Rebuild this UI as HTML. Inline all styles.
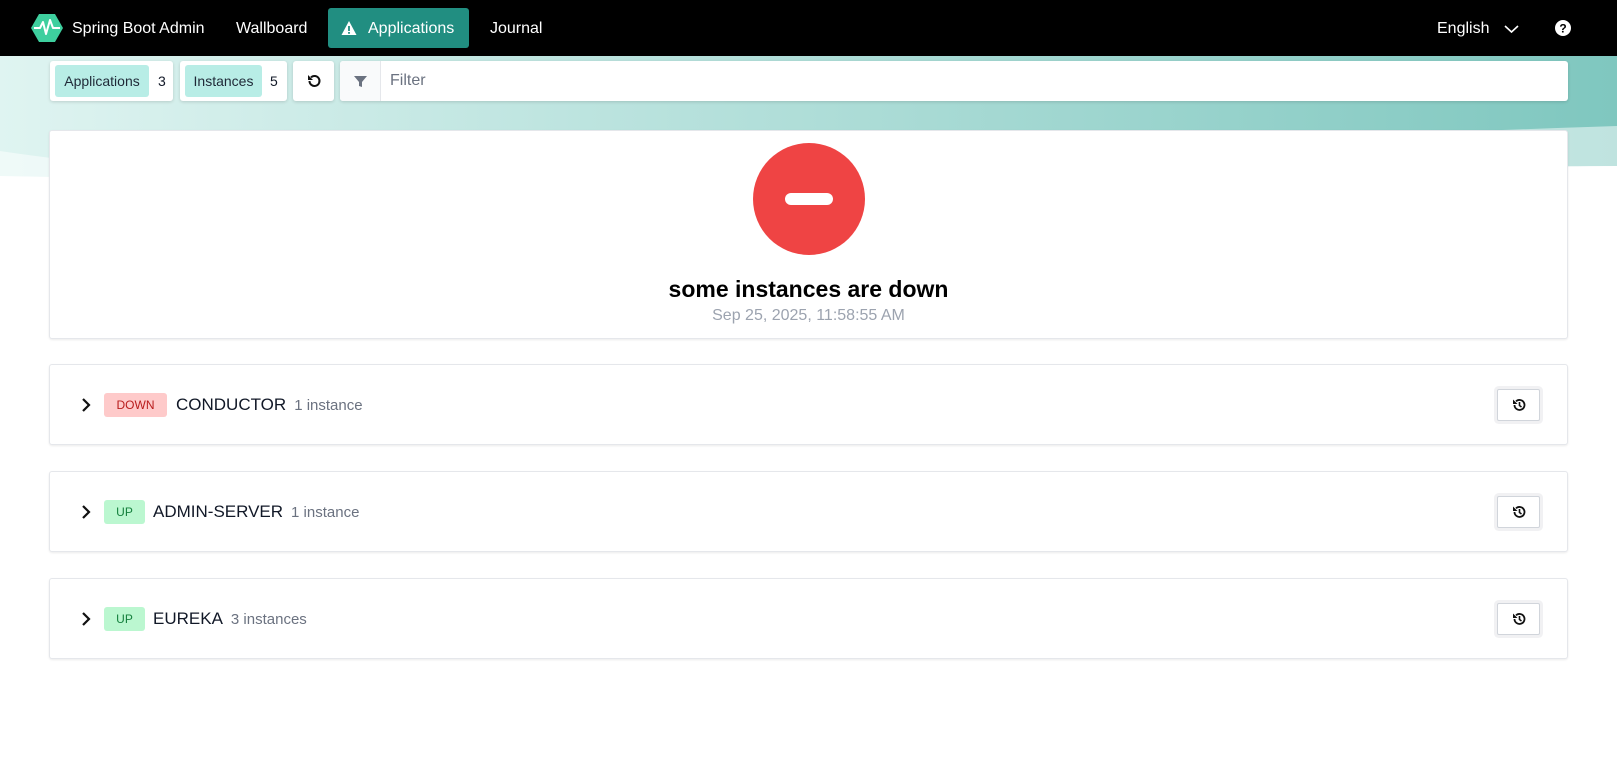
<!DOCTYPE html>
<html><head><style>
*{box-sizing:border-box;margin:0;padding:0}
body{width:1617px;height:758px;overflow:hidden;background:#fff;font-family:"Liberation Sans",sans-serif;position:relative;color:#111827}
.nav{position:absolute;left:0;top:0;width:1617px;height:56px;background:#000;color:#fff;font-size:16px}
.nav span{position:absolute;top:20px}
.bg{position:absolute;left:0;top:56px;width:1617px;height:130px}
.tb{position:absolute;top:61px;height:40px;background:#fff;border-radius:3px;box-shadow:0 1px 3px rgba(0,0,0,.15)}
.chip{position:absolute;top:4px;height:32px;background:#b8ede6;border-radius:3px;font-size:14px;line-height:32px;text-align:center;color:#1f2937}
.card{position:absolute;left:49px;width:1519px;background:#fff;border:1px solid #e5e7eb;border-radius:3px;box-shadow:0 1px 2px rgba(0,0,0,.08)}
.row .chev{position:absolute;left:30px;top:32px}
.badge{position:absolute;top:28px;height:24px;border-radius:3px;font-size:12px;line-height:24px;text-align:center}
.name{position:absolute;top:30px;font-size:17px;color:#111827}
.cnt{font-size:15px;color:#6b7280;margin-left:8px}
.hb{position:absolute;left:1447px;top:24px;width:43px;height:32px;border:1px solid #d1d5db;background:#fff;box-shadow:0 0 0 3px #f1f1f3;border-radius:2px}
</style></head><body>
<div class="nav">
<svg style="position:absolute;left:31px;top:13px" width="32" height="30" viewBox="0 0 32 30"><polygon points="8,1 24,1 32,15 24,29 8,29 0,15" fill="#3ecf9e"/><polyline points="3,15 9,15 12,9 15,21 19,7 22,15 29,15" fill="none" stroke="#fff" stroke-width="2" stroke-linejoin="round"/></svg>
<span style="left:72px">Spring Boot Admin</span>
<span style="left:236px">Wallboard</span>
<div style="position:absolute;left:328px;top:8px;width:141px;height:40px;background:#218e81;border-radius:3px"></div>
<svg style="position:absolute;left:341px;top:20px" width="16" height="16" viewBox="0 0 16 16"><path d="M8 1L15.5 15H.5Z" fill="#fff"/><rect x="7.1" y="6" width="1.8" height="5" fill="#218e81"/><rect x="7.1" y="12" width="1.8" height="1.8" fill="#218e81"/></svg>
<span style="left:368px">Applications</span>
<span style="left:490px">Journal</span>
<span style="left:1437px">English</span>
<svg style="position:absolute;left:1504px;top:24px" width="15" height="10" viewBox="0 0 15 10"><polyline points="1,2 7.5,8 14,2" fill="none" stroke="#fff" stroke-width="1.6"/></svg>
<svg style="position:absolute;left:1555px;top:20px" width="16" height="16" viewBox="0 0 16 16"><circle cx="8" cy="8" r="8" fill="#fff"/><text x="8" y="12.5" text-anchor="middle" font-size="12" font-weight="bold" font-family="Liberation Sans" fill="#000">?</text></svg>
</div>
<svg class="bg" width="1617" height="130" viewBox="0 0 1617 130" preserveAspectRatio="none"><defs><linearGradient id="g" x1="0" x2="1"><stop offset="0" stop-color="#dff4f1"/><stop offset="1" stop-color="#7fc7bf"/></linearGradient></defs><rect width="1617" height="130" fill="url(#g)"/><path d="M0 95 Q300 140 800 110 T1617 70 L1617 130 L0 130Z" fill="#fff" opacity=".5"/><path d="M0 120 Q500 130 1000 120 T1617 110 L1617 130 L0 130Z" fill="#fff"/></svg>
<div class="tb" style="left:50px;width:123px"><div class="chip" style="left:5px;width:94px">Applications</div><span style="position:absolute;left:108px;top:12px;font-size:14px">3</span></div>
<div class="tb" style="left:180px;width:107px"><div class="chip" style="left:5px;width:77px">Instances</div><span style="position:absolute;left:90px;top:12px;font-size:14px">5</span></div>
<div class="tb" style="left:293px;width:41px"><svg style="position:absolute;left:13px;top:12px" width="16" height="16" viewBox="0 0 16 16"><path d="M3.5 8A5 5 0 1 0 5 4.4" fill="none" stroke="#111" stroke-width="2"/><path d="M2 2V7H7Z" fill="#111"/></svg></div>
<div class="tb" style="left:340px;width:1228px"><div style="position:absolute;left:0;top:0;width:41px;height:40px;background:#f9fafb;border-right:1px solid #e5e7eb;border-radius:3px 0 0 3px"></div><svg style="position:absolute;left:14px;top:14px" width="13" height="13" viewBox="0 0 13 13"><path d="M0 1H13L8 7V12L5 11V7Z" fill="#6b7280"/></svg><span style="position:absolute;left:50px;top:11px;font-size:16px;color:#6b7280">Filter</span></div>

<div class="card" style="top:130px;height:209px">
<svg style="position:absolute;left:703px;top:12px" width="112" height="112" viewBox="0 0 112 112"><circle cx="56" cy="56" r="56" fill="#ef4444"/><rect x="32" y="50" width="48" height="12" rx="6" fill="#fff"/></svg>
<div style="position:absolute;left:0;width:100%;top:145px;text-align:center;font-size:23px;font-weight:bold;color:#000">some instances are down</div>
<div style="position:absolute;left:0;width:100%;top:176px;text-align:center;font-size:16px;color:#9ca3af">Sep 25, 2025, 11:58:55 AM</div>
</div>

<div class="card row" style="top:364px;height:81px">
<svg class="chev" width="12" height="16" viewBox="0 0 12 16"><polyline points="3,2 9,8 3,14" fill="none" stroke="#111" stroke-width="2.2"/></svg>
<div class="badge" style="left:54px;width:63px;background:#fecaca;color:#b91c1c">DOWN</div>
<div class="name" style="left:126px">CONDUCTOR<span class="cnt">1 instance</span></div>
<div class="hb"><svg style="position:absolute;left:14px;top:8px" width="14" height="14" viewBox="0 0 14 14"><path d="M2.5 7A5 5 0 1 0 4 3.4" fill="none" stroke="#111" stroke-width="1.8"/><path d="M1 1.5V6H5.5Z" fill="#111"/><polyline points="7.5,4 7.5,7.5 9.5,9" fill="none" stroke="#111" stroke-width="1.6"/></svg></div>
</div>
<div class="card row" style="top:471px;height:81px">
<svg class="chev" width="12" height="16" viewBox="0 0 12 16"><polyline points="3,2 9,8 3,14" fill="none" stroke="#111" stroke-width="2.2"/></svg>
<div class="badge" style="left:54px;width:41px;background:#bbf7d0;color:#15803d">UP</div>
<div class="name" style="left:103px">ADMIN-SERVER<span class="cnt">1 instance</span></div>
<div class="hb"><svg style="position:absolute;left:14px;top:8px" width="14" height="14" viewBox="0 0 14 14"><path d="M2.5 7A5 5 0 1 0 4 3.4" fill="none" stroke="#111" stroke-width="1.8"/><path d="M1 1.5V6H5.5Z" fill="#111"/><polyline points="7.5,4 7.5,7.5 9.5,9" fill="none" stroke="#111" stroke-width="1.6"/></svg></div>
</div>
<div class="card row" style="top:578px;height:81px">
<svg class="chev" width="12" height="16" viewBox="0 0 12 16"><polyline points="3,2 9,8 3,14" fill="none" stroke="#111" stroke-width="2.2"/></svg>
<div class="badge" style="left:54px;width:41px;background:#bbf7d0;color:#15803d">UP</div>
<div class="name" style="left:103px">EUREKA<span class="cnt">3 instances</span></div>
<div class="hb"><svg style="position:absolute;left:14px;top:8px" width="14" height="14" viewBox="0 0 14 14"><path d="M2.5 7A5 5 0 1 0 4 3.4" fill="none" stroke="#111" stroke-width="1.8"/><path d="M1 1.5V6H5.5Z" fill="#111"/><polyline points="7.5,4 7.5,7.5 9.5,9" fill="none" stroke="#111" stroke-width="1.6"/></svg></div>
</div>
</body></html>
